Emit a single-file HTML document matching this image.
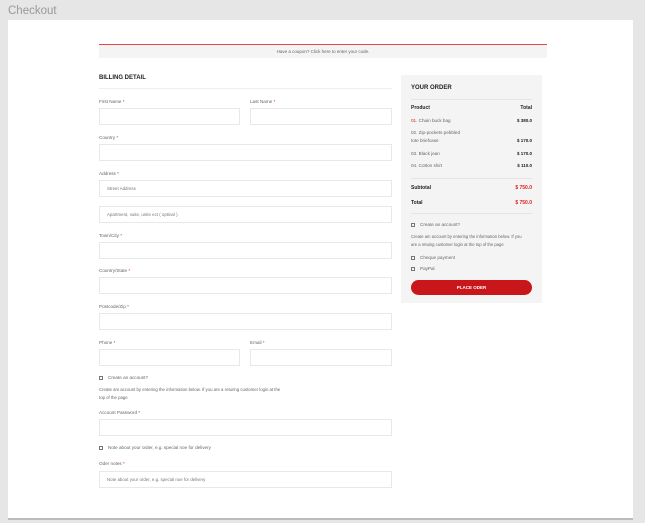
<!DOCTYPE html>
<html><head><meta charset="utf-8"><style>
*{margin:0;padding:0;box-sizing:border-box}
body{width:645px;height:523px;background:#e6e6e6;font-family:"Liberation Sans",sans-serif;position:relative;overflow:hidden;color:#555}
.a{position:absolute;white-space:nowrap}
.t{font-size:4.6px;color:#666}
.r{color:#d22}
.in{position:absolute;border:1px solid #e8e8e8;background:#fff;height:17px}
.in span{position:absolute;left:7px;top:5px;font-size:4.4px;color:#777}
.cb{display:inline-block;width:4px;height:4px;border:0.6px solid #777;margin-right:5px;vertical-align:middle}
.b{font-weight:bold;color:#222}
</style></head><body>
<div class="a" style="left:8px;top:5px;font-size:11.5px;color:#999">Checkout</div>
<div class="a" style="left:8px;top:20px;width:625px;height:498px;background:#fff"></div>
<div class="a" style="left:8px;top:518px;width:625px;height:2px;background:#bbb"></div>
<div class="a" style="left:99px;top:44px;width:448px;height:14px;background:#f4f4f4;border-top:1px solid #e44"></div>
<div class="a t" style="left:99px;top:49px;width:448px;text-align:center;font-size:4.5px">Have a coupon? Click here to enter your code.</div>
<div class="a b" style="left:99px;top:75px;font-size:6px">BILLING DETAIL</div>
<div class="a" style="left:99px;top:88px;width:293px;height:1px;background:#eee"></div>
<div class="a t" style="left:99px;top:99px">First Name <span class="r">*</span></div>
<div class="a t" style="left:250px;top:99px">Last Name <span class="r">*</span></div>
<div class="in" style="left:99px;top:108px;width:141px"></div>
<div class="in" style="left:250px;top:108px;width:142px"></div>
<div class="a t" style="left:99px;top:135px">Country <span class="r">*</span></div>
<div class="in" style="left:99px;top:144px;width:293px"></div>
<div class="a t" style="left:99px;top:171px">Address <span class="r">*</span></div>
<div class="in" style="left:99px;top:180px;width:293px"><span>Street Address</span></div>
<div class="in" style="left:99px;top:206px;width:293px"><span>Apartment, suite, unite ect ( optinal )</span></div>
<div class="a t" style="left:99px;top:233px">Town/City <span class="r">*</span></div>
<div class="in" style="left:99px;top:242px;width:293px"></div>
<div class="a t" style="left:99px;top:268px">Country/State <span class="r">*</span></div>
<div class="in" style="left:99px;top:277px;width:293px"></div>
<div class="a t" style="left:99px;top:304px">Postcode/Zip <span class="r">*</span></div>
<div class="in" style="left:99px;top:313px;width:293px"></div>
<div class="a t" style="left:99px;top:340px">Phone <span class="r">*</span></div>
<div class="a t" style="left:250px;top:340px">Email <span class="r">*</span></div>
<div class="in" style="left:99px;top:349px;width:141px"></div>
<div class="in" style="left:250px;top:349px;width:142px"></div>
<div class="a t" style="left:99px;top:375px"><span class="cb"></span>Create an account?</div>
<div class="a t" style="left:99px;top:387px;font-size:4.3px">Create am account by entering the information below. If you are a returing customer login at the</div>
<div class="a t" style="left:99px;top:395px;font-size:4.3px">top of the page</div>
<div class="a t" style="left:99px;top:410px">Account Password <span class="r">*</span></div>
<div class="in" style="left:99px;top:419px;width:293px"></div>
<div class="a t" style="left:99px;top:445px"><span class="cb"></span>Note about your order, e.g. special noe for delivery</div>
<div class="a t" style="left:99px;top:461px">Oder notes <span class="r">*</span></div>
<div class="in" style="left:99px;top:471px;width:293px"><span>Note about your order, e.g. special noe for delivery</span></div>

<div class="a" style="left:401px;top:75px;width:141px;height:228px;background:#f4f4f4"></div>
<div class="a b" style="left:411px;top:85px;font-size:6px">YOUR ORDER</div>
<div class="a" style="left:411px;top:99px;width:121px;height:1px;background:#e4e4e4"></div>
<div class="a b" style="left:411px;top:105px;font-size:5px">Product</div>
<div class="a b" style="left:411px;top:105px;width:121px;text-align:right;font-size:5px">Total</div>
<div class="a t" style="left:411px;top:118px"><span class="r">01.</span> Chain buck bag</div>
<div class="a b" style="left:411px;top:118px;width:121px;text-align:right;font-size:4.5px">$ 380.0</div>
<div class="a t" style="left:411px;top:130px">02. Zip-pockets pebbled</div>
<div class="a t" style="left:411px;top:138px">tote briefcase</div>
<div class="a b" style="left:411px;top:138px;width:121px;text-align:right;font-size:4.5px">$ 170.0</div>
<div class="a t" style="left:411px;top:151px">03. Black jean</div>
<div class="a b" style="left:411px;top:151px;width:121px;text-align:right;font-size:4.5px">$ 170.0</div>
<div class="a t" style="left:411px;top:163px">04. Cotton shirt</div>
<div class="a b" style="left:411px;top:163px;width:121px;text-align:right;font-size:4.5px">$ 110.0</div>
<div class="a" style="left:411px;top:178px;width:121px;height:1px;background:#e4e4e4"></div>
<div class="a b" style="left:411px;top:185px;font-size:5px">Subtotal</div>
<div class="a r" style="left:411px;top:185px;width:121px;text-align:right;font-size:5px;font-weight:bold">$ 750.0</div>
<div class="a b" style="left:411px;top:200px;font-size:5px">Total</div>
<div class="a r" style="left:411px;top:200px;width:121px;text-align:right;font-size:5px;font-weight:bold">$ 750.0</div>
<div class="a" style="left:411px;top:213px;width:121px;height:1px;background:#e4e4e4"></div>
<div class="a t" style="left:411px;top:222px"><span class="cb"></span>Create an account?</div>
<div class="a t" style="left:411px;top:234px;font-size:4.2px">Create am account by entering the information below. If you</div>
<div class="a t" style="left:411px;top:242px;font-size:4.2px">are a retuing customer login at the top of the page</div>
<div class="a t" style="left:411px;top:255px"><span class="cb"></span>Cheque payment</div>
<div class="a t" style="left:411px;top:266px"><span class="cb"></span>PayPal</div>
<div class="a" style="left:411px;top:280px;width:121px;height:15px;background:#c8161b;border-radius:8px;color:#fff;font-size:4.5px;font-weight:bold;text-align:center;line-height:15px">PLACE ODER</div>
</body></html>
